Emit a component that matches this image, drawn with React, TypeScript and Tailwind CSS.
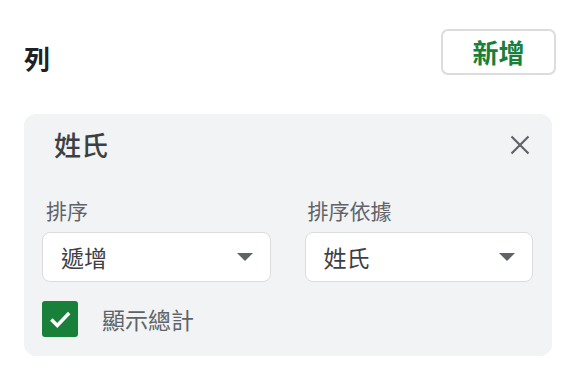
import React from "react";

const font = { fontFamily: '"Noto Sans CJK TC", Roboto, "Noto Sans", sans-serif' };

function Select({ value }: { value: string }) {
  return (
    <div className="flex h-[50px] items-center justify-between rounded-[8px] border border-[#dadce0] bg-white pl-[18px] pr-[17px]">
      <span className="text-[23px] leading-none text-[#3c4043]">{value}</span>
      <svg width="16" height="8" viewBox="0 0 16 8">
        <path d="M0 0 L16 0 L8 8 Z" fill="#5f6368" />
      </svg>
    </div>
  );
}

export default function App() {
  return (
    <div className="h-[374px] w-[574px] bg-white" style={font}>
      <div className="flex items-start justify-between pl-[24px] pr-[18px] pt-[29px]">
        <span className="mt-[13px] text-[26px] font-bold leading-[32px] text-[#202124]">列</span>
        <button className="flex h-[46px] w-[115px] items-center justify-center rounded-[7px] border-2 border-[#dadce0] bg-white text-[26px] font-bold leading-none text-[#188038]">
          新增
        </button>
      </div>
      <div className="ml-[24px] mt-[39px] w-[528px] rounded-[12px] bg-[#f1f3f4] pb-[19px] pl-[18px] pr-[19px] pt-[15px]">
        <div className="flex items-center justify-between">
          <span className="ml-[12px] text-[27px] font-medium leading-[32px] text-[#3c4043]">姓氏</span>
          <svg width="20" height="20" viewBox="0 0 20 20" className="mr-[3px]">
            <path d="M1.5 1.5 L18.5 18.5 M18.5 1.5 L1.5 18.5" stroke="#5f6368" strokeWidth="2.2" />
          </svg>
        </div>
        <div className="mt-[35px] grid grid-cols-2 gap-x-[34px]">
          <div className="flex flex-col">
            <span className="pl-[4px] text-[21px] leading-[28px] text-[#5f6368]">排序</span>
            <div className="mt-[8px]">
              <Select value="遞增" />
            </div>
          </div>
          <div className="flex flex-col">
            <span className="pl-[3px] text-[21px] leading-[28px] text-[#5f6368]">排序依據</span>
            <div className="mt-[8px]">
              <Select value="姓氏" />
            </div>
          </div>
        </div>
        <div className="mt-[19px] flex items-center gap-[24px]">
          <div className="flex h-[36px] w-[36px] items-center justify-center rounded-[3px] bg-[#188038]">
            <svg width="26" height="26" viewBox="0 0 24 24">
              <path d="M4 12.5 L9.5 18 L20.5 6.5" fill="none" stroke="white" strokeWidth="3.2" />
            </svg>
          </div>
          <span className="text-[23px] leading-none text-[#5f6368]">顯示總計</span>
        </div>
      </div>
    </div>
  );
}
